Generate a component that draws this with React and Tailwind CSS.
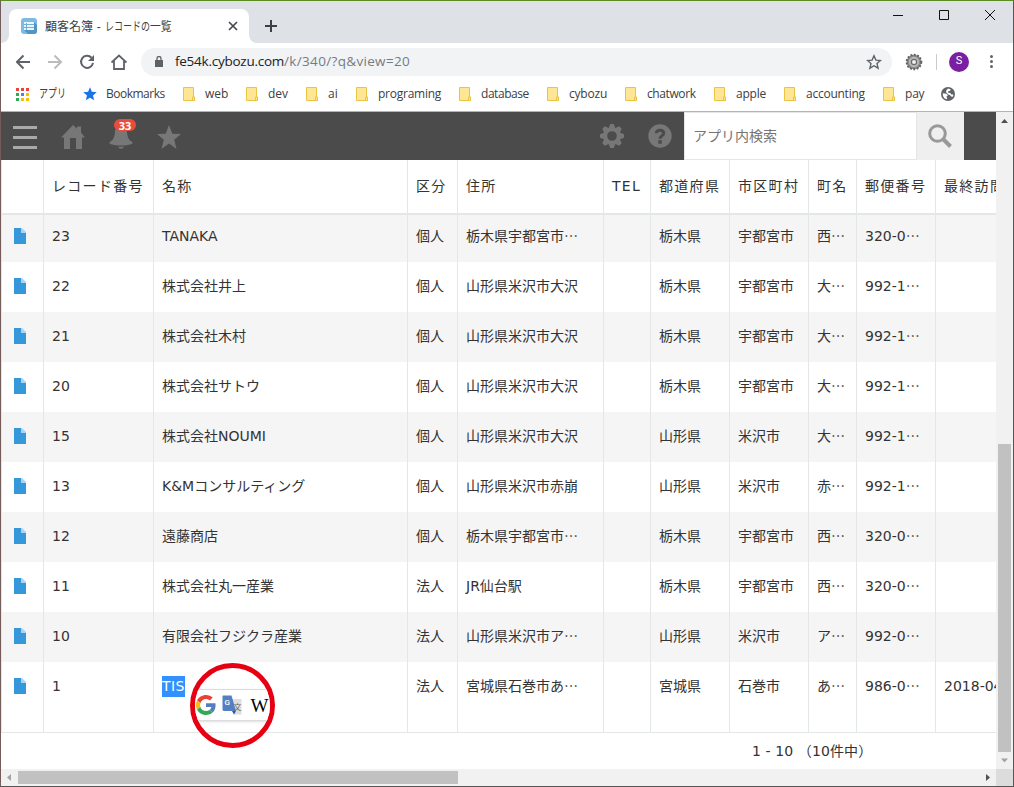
import React, { useState } from "react";
import { clsx } from "clsx";

// browser bookmarks, w = full width of the entry
const bookmarks = [
  { label: "web", w: "w-[63px]", text: "tracking-[0px]" },
  { label: "dev", w: "w-[60px]", text: "tracking-[0px]" },
  { label: "ai", w: "w-[50px]", text: "tracking-[0px]" },
  { label: "programing", w: "w-[103px]", text: "tracking-[-0.25px]" },
  { label: "database", w: "w-[88px]", text: "tracking-[-0.45px]" },
  { label: "cybozu", w: "w-[78px]", text: "tracking-[-0.2px]" },
  { label: "chatwork", w: "w-[89px]", text: "tracking-[-0.4px]" },
  { label: "apple", w: "w-[70px]", text: "tracking-[-0.2px]" },
  { label: "accounting", w: "w-[99px]", text: "tracking-[-0.25px]" },
  { label: "pay", w: "w-[58px]", text: "tracking-[-0.2px]" },
];

const headers = ["", "レコード番号", "名称", "区分", "住所", "TEL", "都道府県", "市区町村", "町名", "郵便番号", "最終訪問日"];

const records = [
  { id: 23, name: "TANAKA", kind: "個人", address: "栃木県宇都宮市…", pref: "栃木県", city: "宇都宮市", town: "西…", zip: "320-0…" },
  { id: 22, name: "株式会社井上", kind: "個人", address: "山形県米沢市大沢", pref: "栃木県", city: "宇都宮市", town: "大…", zip: "992-1…" },
  { id: 21, name: "株式会社木村", kind: "個人", address: "山形県米沢市大沢", pref: "栃木県", city: "宇都宮市", town: "大…", zip: "992-1…" },
  { id: 20, name: "株式会社サトウ", kind: "個人", address: "山形県米沢市大沢", pref: "栃木県", city: "宇都宮市", town: "大…", zip: "992-1…" },
  { id: 15, name: "株式会社NOUMI", kind: "個人", address: "山形県米沢市大沢", pref: "山形県", city: "米沢市", town: "大…", zip: "992-1…" },
  { id: 13, name: "K&Mコンサルティング", kind: "個人", address: "山形県米沢市赤崩", pref: "山形県", city: "米沢市", town: "赤…", zip: "992-1…" },
  { id: 12, name: "遠藤商店", kind: "個人", address: "栃木県宇都宮市…", pref: "栃木県", city: "宇都宮市", town: "西…", zip: "320-0…" },
  { id: 11, name: "株式会社丸一産業", kind: "法人", address: "JR仙台駅", pref: "栃木県", city: "宇都宮市", town: "西…", zip: "320-0…" },
  { id: 10, name: "有限会社フジクラ産業", kind: "法人", address: "山形県米沢市ア…", pref: "山形県", city: "米沢市", town: "ア…", zip: "992-0…" },
  { id: 1, name: "TIS", kind: "法人", address: "宮城県石巻市あ…", pref: "宮城県", city: "石巻市", town: "あ…", zip: "986-0…", visited: "2018-04-12", selected: true },
];

const gridCols = "grid grid-cols-[42px_110px_254px_50px_146px_47px_79px_79px_48px_79px_110px]";

function FolderIcon() {
  return (
    <svg width="12" height="14" viewBox="0 0 12 14" className="shrink-0">
      <path d="M.5.5h10v9.5h1v3.5H.5z" fill="#ffe694" stroke="#ecc443" />
      <path d="M9.5 13.5V10h2v3.5z" fill="#ffe694" stroke="#ecc443" />
    </svg>
  );
}

function RecordIcon() {
  return (
    <svg width="12" height="16" viewBox="0 0 12 16">
      <path d="M0 0h7v5h5v11H0z" fill="#3498db" />
      <path d="M8 0l4 4v1H7V0z" fill="#a9d3f0" />
    </svg>
  );
}

function GearShape({ size, color, hole }) {
  return (
    <svg width={size} height={size} viewBox="0 0 24 24">
      {[0, 45, 90, 135].map((a) => (
        <path key={a} d="M10.2 0h3.6l1.4 4v16l-1.4 4h-3.6l-1.4-4V4z" fill={color} transform={`rotate(${a} 12 12)`} />
      ))}
      <circle cx="12" cy="12" r="8.8" fill={color} />
      <circle cx="12" cy="12" r="4.8" fill={hole} />
    </svg>
  );
}

function TabStrip() {
  return (
    <div className="flex h-[42px] bg-[#dee1e6] pl-2">
      <div className="relative mt-2 flex h-[34px] w-[240px] items-center rounded-t-lg bg-white pl-3 pr-[11px]">
        <svg className="absolute -left-2 bottom-0" width="8" height="8"><path d="M8 0v8H0a8 8 0 0 0 8-8" fill="#fff" /></svg>
        <svg className="absolute -right-2 bottom-0" width="8" height="8"><path d="M0 0v8h8a8 8 0 0 1-8-8" fill="#fff" /></svg>
        <svg width="16" height="16" viewBox="0 0 16 16">
          <rect width="16" height="16" rx="3" fill="#7ebbe4" />
          <path d="M13 4l3 3v6a3 3 0 0 1-3 3H7l-4-4z" fill="#4f96c5" />
          <path d="M3 4h10v8H3z" fill="#eaf5fc" />
          <path d="M3 6.500h10M3 9.500h10M5.500 5v7" stroke="#6fafd8" />
        </svg>
        <span className="ml-2 mt-px flex whitespace-pre font-['Liberation_Sans','Noto_Sans_CJK_JP',sans-serif] text-[12px] text-[#3c4043]">
          <span>顧客名簿</span>
          <span className="tracking-[0.5px]"> - </span>
          <span className="w-[45px] origin-left scale-x-75">レコードの</span>
          <span className="w-[21px] origin-left scale-x-90">一覧</span>
        </span>
        <svg className="ml-auto" width="10" height="10" viewBox="0 0 10 10"><path d="M1 1l8 8M9 1L1 9" stroke="#45494d" strokeWidth="1.7" /></svg>
      </div>
      <svg className="ml-4 mt-[19px]" width="12" height="12" viewBox="0 0 12 12"><path d="M6 0v12M0 6h12" stroke="#3c4043" strokeWidth="2" /></svg>
      <div className="ml-auto flex items-start pr-4 pt-2">
        <svg width="104" height="12" viewBox="0 0 104 12" fill="none" stroke="#111">
          <path d="M0 6.500h10" />
          <path d="M46.500 1.500h9v9h-9z" />
          <path d="M92 1l10 10M102 1L92 11" />
        </svg>
      </div>
    </div>
  );
}

function Toolbar() {
  return (
    <div className="flex h-[37px] items-center bg-white pl-[15px] text-[#5f6368]">
      <svg width="111" height="18" viewBox="0 0 111 18" fill="none" strokeWidth="2" className="shrink-0">
        <path d="M14 9H1.500M7.500 2.500L1 9l6.500 6.500" stroke="#5f6368" />
        <path d="M32 9h12.500M38.500 2.500L45 9l-6.500 6.500" stroke="#babcbe" />
        <path d="M75.500 4.800A6 6 0 1 0 77 9.800" stroke="#5f6368" />
        <path d="M78 2v6h-6z" fill="#5f6368" />
        <path d="M95.500 9.500L103 2.500l7.500 7M98 8v8h10V8" stroke="#5f6368" strokeWidth="1.800" />
      </svg>
      <div className="ml-[14px] flex h-7 w-[751px] items-center rounded-full bg-[#f1f3f4] pl-[14px] pr-[10px]">
        <svg width="8" height="11" viewBox="0 0 8 11"><path d="M0 4h8v7H0z" fill="#5f6368" /><path d="M2 4V2.500a2 2 0 0 1 4 0V4" fill="none" stroke="#5f6368" strokeWidth="1.300" /></svg>
        <span className="ml-[12px] whitespace-nowrap font-['Open_Sans',sans-serif] text-[13.500px] tracking-[-0.25px] text-[#202124]">
          fe54k.cybozu.com<span className="tracking-[0.33px] text-[#777b80]">/k/340/?q&amp;view=20</span>
        </span>
        <svg className="ml-auto" width="16" height="16" viewBox="0 0 16 16">
          <path d="M8 1.800l1.900 4.300 4.600.4-3.500 3.100 1.100 4.600L8 11.700l-4.100 2.500L5 9.600 1.500 6.500l4.600-.4z" fill="none" stroke="#5f6368" strokeWidth="1.400" />
        </svg>
      </div>
      <svg className="ml-[13px]" width="18" height="18" viewBox="0 0 18 18">
        <circle cx="9" cy="9" r="7.300" fill="#858585" stroke="#626262" strokeWidth="2" strokeDasharray="1.900 1.500" />
        <circle cx="9" cy="9" r="5.600" fill="#b9b9b9" stroke="#8c8c8c" />
        <circle cx="9" cy="9" r="2.600" fill="#eee" stroke="#6c6c6c" strokeWidth="1.200" />
      </svg>
      <div className="ml-[13px] h-4 w-px bg-[#c8cacc]" />
      <div className="ml-[12px] flex size-5 items-center justify-center rounded-full bg-[#7b1fa2] font-['Roboto',sans-serif] text-[11px] text-white">S</div>
      <div className="ml-[21px] flex flex-col gap-[2px]">
        <i className="size-[3px] rounded-full bg-[#5f6368]" />
        <i className="size-[3px] rounded-full bg-[#5f6368]" />
        <i className="size-[3px] rounded-full bg-[#5f6368]" />
      </div>
    </div>
  );
}

function BookmarkBar() {
  const dots = ["#ea4335", "#ea4335", "#ea4335", "#34a853", "#4285f4", "#fbbc04", "#34a853", "#fbbc04", "#fbbc04"];
  return (
    <div className="flex h-8 items-center border-b border-[#b3b3b3] bg-white pb-[3px] pl-[15px] font-['Open_Sans','Noto_Sans_CJK_JP',sans-serif] text-[12px] text-[#3c4043]">
      <div className="flex w-[67px] items-center">
        <svg width="13" height="13" viewBox="0 0 13 13" className="shrink-0">
          {dots.map((c, i) => <rect key={i} x={(i % 3) * 5} y={Math.floor(i / 3) * 5} width="3" height="3" fill={c} />)}
        </svg>
        <span className="ml-[10px] origin-left scale-x-75 whitespace-nowrap">アプリ</span>
      </div>
      <div className="flex w-[100px] items-center">
        <svg width="14" height="14" viewBox="0 0 14 14"><path d="M7 .3l1.900 4.500 4.800.4L10 8.400l1.200 4.900L7 10.800l-4.200 2.500L4 8.400.3 5.200l4.800-.4z" fill="#1a73e8" /></svg>
        <span className="ml-[9px] tracking-[-0.5px]">Bookmarks</span>
      </div>
      {bookmarks.map((b) => (
        <div key={b.label} className={clsx("flex shrink-0 items-center", b.w)}>
          <FolderIcon />
          <span className={clsx("ml-[10px]", b.text)}>{b.label}</span>
        </div>
      ))}
      <svg width="14" height="14" viewBox="0 0 14 14">
        <circle cx="7" cy="7" r="7" fill="#5f6368" />
        <path d="M1.800 6.200l3.700.6 1.300 1.700-1.300 1 .8 2.700C3.300 12 1.500 9.500 1.800 6.200zM7 1.500l2.600.7-.4 1.600-2.300.8.4 1.200 2.200.2.700 1.500 2.200.1-.5 2.200-1.900-.2-1-1.500-2-.6L5 5l.5-2z" fill="#fff" />
      </svg>
    </div>
  );
}

function AppHeader() {
  const [query, setQuery] = useState("");
  return (
    <header className="flex h-12 items-center bg-[#4b4b4b] pl-3">
      <nav className="flex items-center pt-[2px]">
        <div className="flex h-6 w-6 flex-col justify-end gap-[7px]">
          <i className="h-[3px] bg-[#a9a9a9]" />
          <i className="h-[3px] bg-[#a9a9a9]" />
          <i className="h-[3px] bg-[#a9a9a9]" />
        </div>
        <svg className="ml-6" width="24" height="24" viewBox="0 0 24 24">
          <path d="M12 0l4 3.800V1.500h4v6.100l4 4.900h-3V24h-6V13H9v11H3V12.500H0z" fill="#777" />
        </svg>
        <div className="relative ml-6 size-6">
          <svg width="24" height="24" viewBox="0 0 24 24">
            <path d="M12 0c3 0 5.500 2.500 6 7 .5 5 1.500 7.500 4.500 9.500 1.500 1 1.500 2-.5 2.800-5 1.700-15 1.700-20 0-2-.8-2-1.800-.5-2.800 3-2 4-4.500 4.500-9.500C6.500 2.500 9 0 12 0zM9 21.800h6c-.5 1.300-1.500 2-3 2s-2.500-.7-3-2z" fill="#777" />
          </svg>
          <span className="absolute -top-[6px] left-[5px] flex h-3 w-[22px] items-center justify-center rounded-full bg-[#e74c3c] font-['Open_Sans',sans-serif] text-[11px] font-bold leading-none text-white">33</span>
        </div>
        <svg className="ml-6" width="24" height="24" viewBox="0 0 24 24">
          <path d="M12 0l3.300 8.800 8.700.3-6.800 5.700L19.500 24 12 18.600 4.500 24l2.300-9.200L0 9.100l8.700-.3z" fill="#777" />
        </svg>
      </nav>
      <div className="ml-auto flex items-center">
        <GearShape size={24} color="#777" hole="#4b4b4b" />
        <svg className="ml-6 mr-[12px]" width="24" height="24" viewBox="0 0 24 24">
          <circle cx="12" cy="12" r="11.700" fill="#777" />
          <path d="M8.300 9.200C8.300 5.300 15.700 5.300 15.700 9.300 15.700 12 12 11.700 12 14.800" fill="none" stroke="#4b4b4b" strokeWidth="3" />
          <path d="M10.300 16.200h3.500v3.500h-3.500z" fill="#4b4b4b" />
        </svg>
        <input
          value={query}
          onChange={(e) => setQuery(e.target.value)}
          placeholder="アプリ内検索"
          className="h-12 w-[233px] border border-[#e3e7e8] bg-white px-2 pb-px font-['DejaVu_Sans','Noto_Sans_CJK_JP',sans-serif] text-[14px] outline-none placeholder:text-[#757575]"
        />
        <button className="mr-8 flex h-12 w-[47px] items-center bg-[#efefef] pl-[11px]">
          <svg width="24" height="24" viewBox="0 0 24 24" fill="none" stroke="#999">
            <circle cx="9.500" cy="9.500" r="7.800" strokeWidth="3" />
            <path d="M15 15l7.500 7.500" strokeWidth="4" />
          </svg>
        </button>
      </div>
    </header>
  );
}

function SelectionPopup() {
  return (
    <div className="absolute left-[28px] top-[-13px] z-10 flex size-[85px] items-center justify-center overflow-hidden rounded-full border-[5px] border-[#e60012]">
      <div className="mb-px flex h-8 w-[82px] shrink-0 items-center rounded-lg border border-[#dcdcdc] bg-white pl-[3px] shadow-sm">
        <svg width="20" height="20" viewBox="0 0 48 48" className="shrink-0">
          <path fill="#ea4335" d="M24 9.500c3.540 0 6.710 1.220 9.210 3.600l6.850-6.850C35.900 2.380 30.470 0 24 0 14.620 0 6.510 5.380 2.560 13.220l7.980 6.190C12.430 13.720 17.740 9.500 24 9.500z" />
          <path fill="#557ebf" d="M46.980 24.550c0-1.570-.15-3.090-.38-4.550H24v9.020h12.940c-.58 2.960-2.260 5.480-4.780 7.180l7.730 6c4.510-4.180 7.090-10.360 7.090-17.650z" />
          <path fill="#fbbc05" d="M10.530 28.590c-.48-1.450-.76-2.990-.76-4.590s.27-3.140.76-4.590l-7.980-6.190C.92 16.460 0 20.120 0 24s.92 7.540 2.560 10.780z" />
          <path fill="#34a853" d="M24 48c6.480 0 11.930-2.130 15.890-5.810l-7.730-6c-2.150 1.450-4.920 2.300-8.160 2.300-6.260 0-11.570-4.220-13.470-9.910l-7.980 6.190C6.510 42.620 14.620 48 24 48z" />
        </svg>
        <div className="relative ml-[6px] size-5 shrink-0">
          <svg width="20" height="20" viewBox="0 0 20 20">
            <path d="M9 4h10.500v15.500H12z" fill="#dedede" />
            <path d="M1 .5h8.500L14 16H1.500L.5 15V1z" fill="#5380c4" />
            <path d="M10 16h4l-2 3.500z" fill="#2c57a8" />
          </svg>
          <span className="absolute left-[3px] top-[3px] font-['Roboto',sans-serif] text-[8px] font-medium leading-[10px] text-white">G</span>
          <span className="absolute left-[12px] top-[7px] font-['Noto_Sans_CJK_JP',sans-serif] text-[8px] leading-[10px] text-[#666]">文</span>
        </div>
        <span className="ml-[9px] font-['Liberation_Serif',serif] text-[19px] leading-none text-black">W</span>
      </div>
    </div>
  );
}

function Cell({ className, children }) {
  return <div className={clsx("overflow-hidden whitespace-nowrap border-l border-[#e3e7e8] pl-2", className)}>{children}</div>;
}

// truncated values end in a full-width, vertically centred ellipsis
function Clipped({ value }) {
  if (!value.endsWith("…")) return value;
  return (
    <>
      {value.slice(0, -1)}
      <span lang="ja" className="font-['Noto_Sans_CJK_JP',sans-serif] leading-none">…</span>
    </>
  );
}

function RecordTable() {
  return (
    <div className="font-['DejaVu_Sans','Noto_Sans_CJK_JP',sans-serif] text-[14px] text-[#333]">
      <div className={clsx(gridCols, "h-[55px] border-b-2 border-[#e3e7e8] bg-white tracking-[1.3px]")}>
        {headers.map((h, i) => <Cell key={i} className="pt-4 leading-5">{h}</Cell>)}
      </div>
      {records.map((r, i) => (
        <div
          key={r.id}
          className={clsx(
            gridCols,
            "leading-5",
            i % 2 === 0 && !r.selected ? "bg-[#f5f5f5]" : "bg-white",
            i === 0 ? "h-[47px] [&>div]:pt-[11px]" : r.selected ? "h-[71px] border-b border-[#e3e7e8] [&>div]:pt-[14px]" : "h-[50px] [&>div]:pt-[14px]"
          )}
        >
          <Cell className="pl-[12px]"><div className="pt-[2px]"><RecordIcon /></div></Cell>
          <Cell>{r.id}</Cell>
          {r.selected ? (
            <Cell className="overflow-visible">
              <span className="relative inline-block h-[21px] w-[23px] bg-[#3390ff] text-white">
                <span className="tracking-[0.4px]">{r.name}</span>
                <SelectionPopup />
              </span>
            </Cell>
          ) : (
            <Cell>{r.name}</Cell>
          )}
          <Cell>{r.kind}</Cell>
          <Cell><Clipped value={r.address} /></Cell>
          <Cell />
          <Cell>{r.pref}</Cell>
          <Cell>{r.city}</Cell>
          <Cell><Clipped value={r.town} /></Cell>
          <Cell><Clipped value={r.zip} /></Cell>
          <Cell>{r.visited}</Cell>
        </div>
      ))}
      <div className="flex h-9 items-center bg-white pl-[751px] tracking-[0.1px]">1 - 10 （10件中）</div>
    </div>
  );
}

export default function App() {
  return (
    <div className="flex h-[787px] w-[1014px] flex-col overflow-hidden border border-b-[#555] border-l-[#735c5c] border-r-[#555] border-t-[#5a8f20] bg-white">
      <TabStrip />
      <Toolbar />
      <BookmarkBar />
      <div className="flex h-[657px]">
        <main className="w-[995px] overflow-hidden">
          <AppHeader />
          <RecordTable />
        </main>
        {/* vertical scrollbar */}
        <div className="flex w-[17px] flex-col items-center bg-[#f1f1f1]">
          <svg width="17" height="17" viewBox="0 0 17 17"><path d="M5 11l3.500-4 3.500 4z" fill="#505050" /></svg>
          <div className="mt-[315px] h-[308px] w-[13px] bg-[#c1c1c1]" />
          <svg width="17" height="17" viewBox="0 0 17 17"><path d="M5 6.500l3.500 4 3.500-4z" fill="#a3a3a3" /></svg>
        </div>
      </div>
      {/* horizontal scrollbar */}
      <div className="flex h-[17px] items-center bg-[#f1f1f1]">
        <svg width="17" height="17" viewBox="0 0 17 17"><path d="M10 5L6 8.500l4 3.500z" fill="#a3a3a3" /></svg>
        <div className="h-[13px] w-[440px] bg-[#c1c1c1]" />
        <svg className="ml-auto" width="17" height="17" viewBox="0 0 17 17"><path d="M7 5l4 3.500L7 12z" fill="#505050" /></svg>
        <div className="h-full w-[17px] bg-[#dcdcdc]" />
      </div>
    </div>
  );
}
